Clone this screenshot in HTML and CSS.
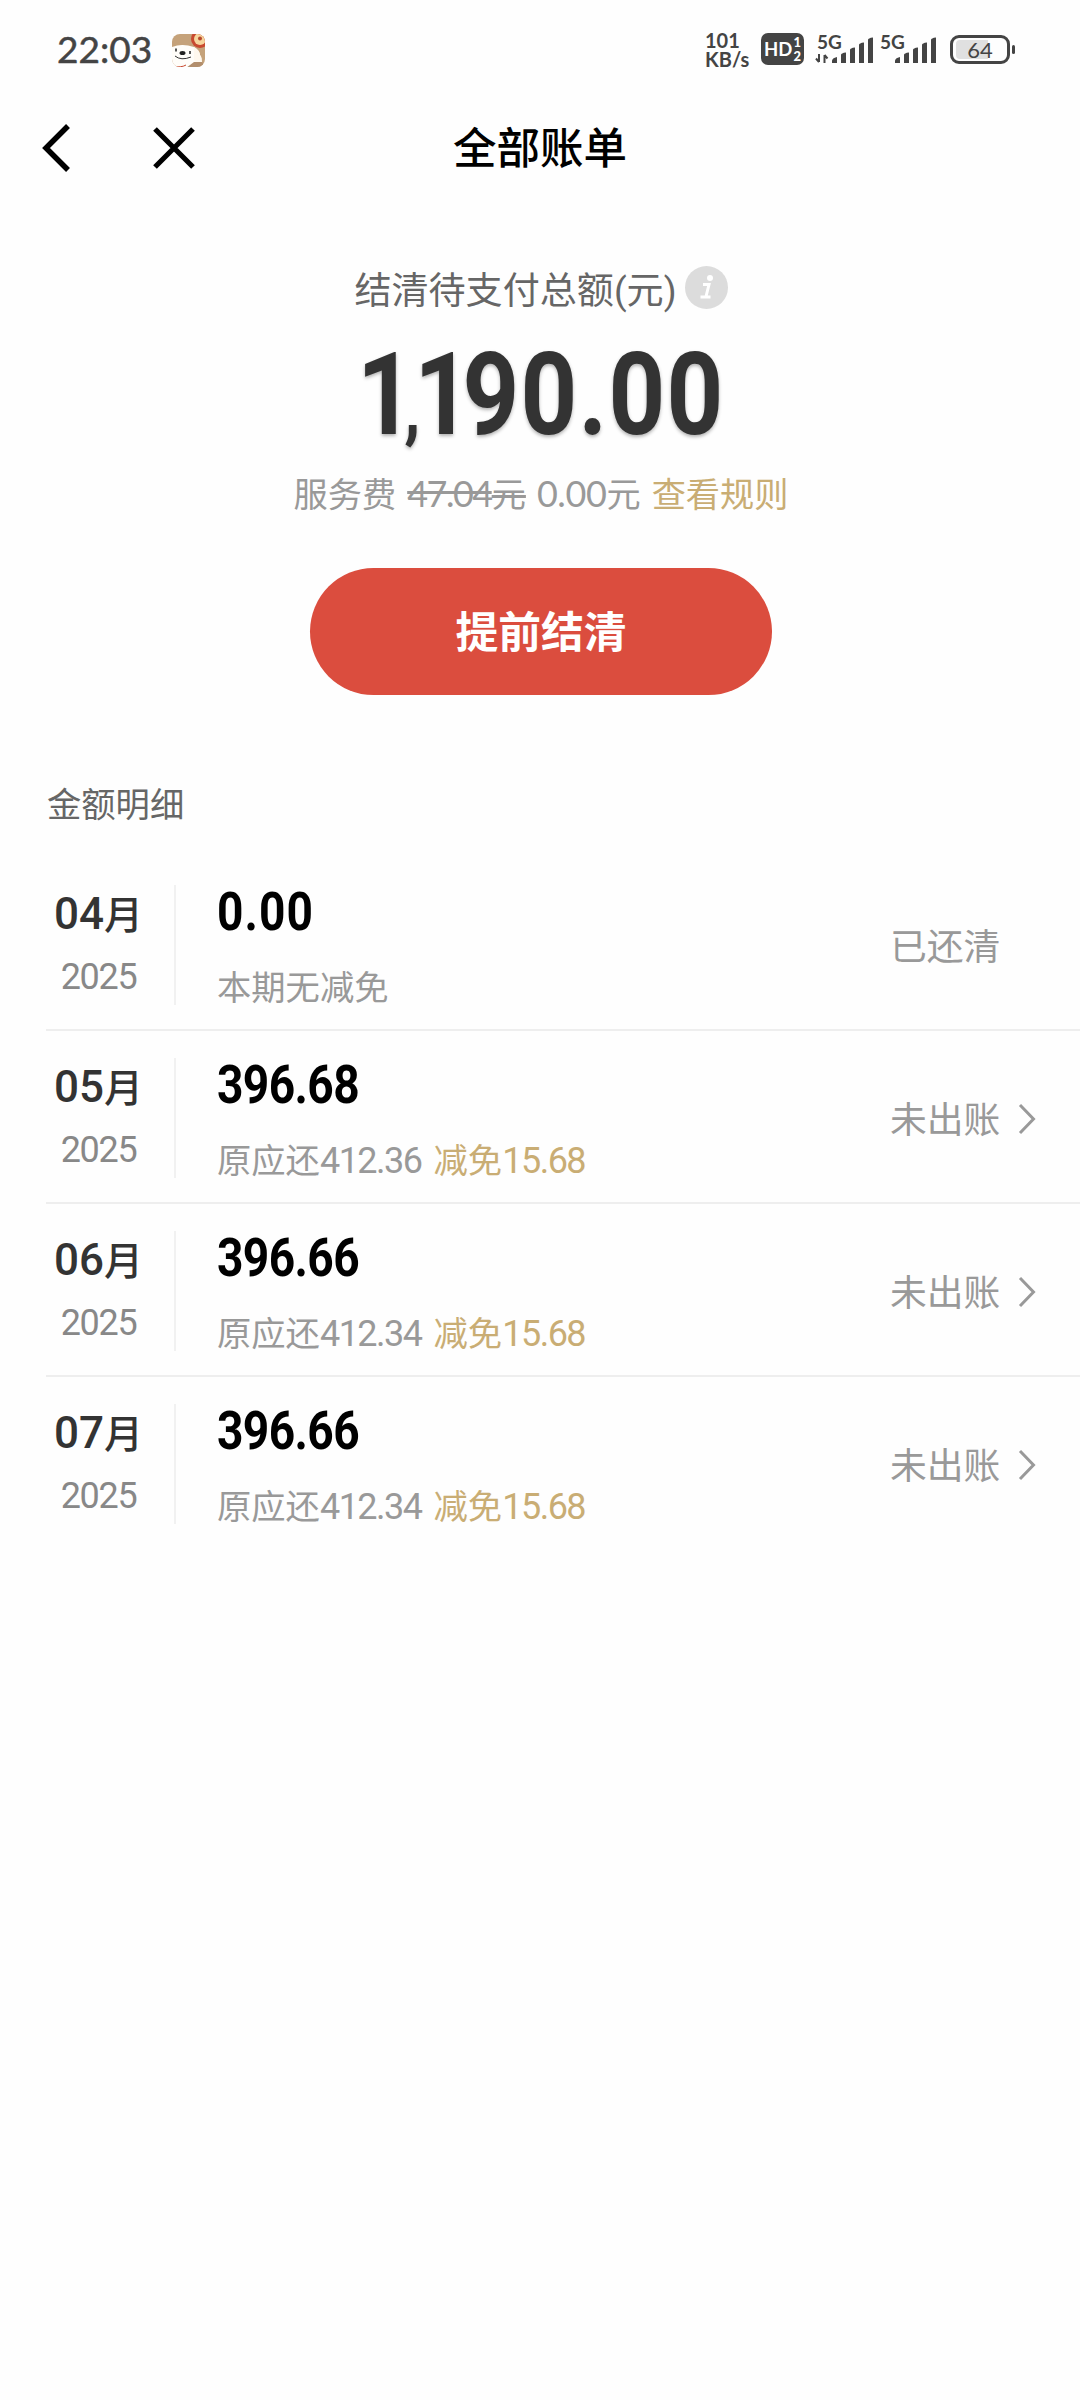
FILE: index.html
```html
<!DOCTYPE html>
<html lang="zh-CN">
<head>
<meta charset="utf-8">
<title>全部账单</title>
<link rel="stylesheet" href="styles.css">
</head>
<body>
<header class="status">
  <span class="clock">22:03</span>
  <svg class="app" width="34" height="34" viewBox="0 0 34 34">
    <defs><clipPath id="r"><rect width="33" height="33" rx="8"/></clipPath></defs>
    <g clip-path="url(#r)">
      <rect width="34" height="34" fill="#c5a27a"/>
      <path d="M0 13 Q10 9 22 13 Q28 16 30 28 L22 34 H0Z" fill="#fffdf9"/>
      <path d="M22 13 Q28 16 28 21 Q31 24 29 29 Q25 30 22 26Z" fill="#fff8ee"/>
      <path d="M22 28 L30 28 L34 34 H14Z" fill="#b28e6c"/>
      <path d="M1 18 Q0 31 10 32 Q20 32 22 24 L20 14 Q9 9 1 14Z" fill="#fffdf9"/>
      <circle cx="28" cy="5" r="9" fill="#c8492f"/>
      <circle cx="28" cy="5" r="6" fill="#f6d59d"/>
      <circle cx="28" cy="4.500" r="2" fill="#b94a2c"/>
      <path d="M1 32 Q9 34 14 31" stroke="#c8492f" stroke-width="1" fill="none"/>
    </g>
    <ellipse cx="10.500" cy="19" rx="3" ry="2" fill="#222"/>
    <path d="M4 14.500v3M18 17v3" stroke="#222" stroke-width="1.500"/>
    <path d="M3 22 Q9 27 19 23" stroke="#333" stroke-width="1" fill="none"/>
  </svg>
  <span class="speed"><b>101</b><b>KB/s</b></span>
  <span class="hd"><b>HD</b><span class="sim"><i>1</i><i>2</i></span></span>
  <span class="signal">
    <b>5G</b>
    <svg width="60" height="40" viewBox="0 0 60 40" fill="#444">
      <path d="M4 22v8M1 26.500l3 3.500M9.500 31v-8M9.500 23l3 3.500" stroke="#444" stroke-width="2" fill="none"/>
      <path d="M17 29q0-3 5-4v6h-5zM26 23q0-2 5-2.500V31h-5zM35 18q0-2 5-2.500V31h-5zM44 13q0-2 5-2.500V31h-5zM53 8q0-2 5-2.500V31h-5z"/>
    </svg>
  </span>
  <span class="signal second">
    <b>5G</b>
    <svg width="60" height="40" viewBox="0 0 60 40" fill="#444">
      <path d="M17 29q0-3 5-4v6h-5zM26 23q0-2 5-2.500V31h-5zM35 18q0-2 5-2.500V31h-5zM44 13q0-2 5-2.500V31h-5zM53 8q0-2 5-2.500V31h-5z"/>
    </svg>
  </span>
  <span class="battery"><span>64</span></span>
  <span class="cap"></span>
</header>
<nav class="nav">
  <svg class="back" width="30" height="50" viewBox="0 0 30 50"><path d="M26 3 L4 25 L26 47" fill="none" stroke="#000" stroke-width="5.500"/></svg>
  <svg class="close" width="42" height="42" viewBox="0 0 42 42"><path d="M2 2 L40 40 M40 2 L2 40" fill="none" stroke="#000" stroke-width="5.200"/></svg>
  <h1>全部账单</h1>
</nav>
<section class="summary">
  <div class="label"><span>结清待支付总额(元)</span>
    <svg width="43" height="43" viewBox="0 0 43 43"><circle cx="21.500" cy="21.500" r="21.500" fill="#dcdcdc"/><circle cx="25" cy="12" r="3" fill="#fff"/><path d="M18 18.500h6l-3 12M15.500 31h10" fill="none" stroke="#fff" stroke-width="3"/></svg>
  </div>
  <div class="total"><span class="t1">1<i>,</i>1</span><span class="t2">90.00</span></div>
  <div class="fee"><span>服务费</span><s><i>47.04</i>元</s><span><i>0.00</i>元</span><a>查看规则</a></div>
  <button class="pay">提前结清</button>
</section>
<h2 class="heading">金额明细</h2>
<main class="bills">
  <article class="bill">
    <div class="date"><strong>04<em>月</em></strong><span>2025</span></div>
    <div class="info"><strong class="zero">0.00</strong><p>本期无减免</p></div>
    <div class="state">已还清</div>
  </article>
  <article class="bill">
    <div class="date"><strong>05<em>月</em></strong><span>2025</span></div>
    <div class="info"><strong>396.68</strong><p>原应还<i>412.36</i><span>减免<i>15.68</i></span></p></div>
    <div class="state">未出账<svg width="18" height="32" viewBox="0 0 18 32"><path d="M2 2 L15.500 16 L2 30" fill="none" stroke="#999" stroke-width="3"/></svg></div>
  </article>
  <article class="bill">
    <div class="date"><strong>06<em>月</em></strong><span>2025</span></div>
    <div class="info"><strong>396.66</strong><p>原应还<i>412.34</i><span>减免<i>15.68</i></span></p></div>
    <div class="state">未出账<svg width="18" height="32" viewBox="0 0 18 32"><path d="M2 2 L15.500 16 L2 30" fill="none" stroke="#999" stroke-width="3"/></svg></div>
  </article>
  <article class="bill">
    <div class="date"><strong>07<em>月</em></strong><span>2025</span></div>
    <div class="info"><strong>396.66</strong><p>原应还<i>412.34</i><span>减免<i>15.68</i></span></p></div>
    <div class="state">未出账<svg width="18" height="32" viewBox="0 0 18 32"><path d="M2 2 L15.500 16 L2 30" fill="none" stroke="#999" stroke-width="3"/></svg></div>
  </article>
</main>
</body>
</html>
```
FILE: styles.css
```css
* { box-sizing: border-box; }
body { margin: 0; width: 1080px; height: 2400px; overflow: hidden; background: #fefefe; color: #333; font-family: Roboto, "Noto Sans CJK SC", sans-serif; }
h1, h2, p { margin: 0; font-weight: 400; }
i, em { font-style: normal; }
svg { display: block; flex: none; }

.status { display: flex; align-items: flex-start; height: 98px; padding: 30px 0 0 57px; color: #444; font-family: Lato, sans-serif; }
.clock { width: 115px; font-size: 37px; line-height: 38px; -webkit-text-stroke: .5px #444; }
.app { margin-top: 4px; }
.speed { width: 56px; margin: 1px 0 0 499px; font-size: 20px; line-height: 19px; }
.speed b { display: block; height: 19px; }
.hd { display: flex; align-items: center; justify-content: center; gap: 1px; width: 43px; height: 32px; margin-top: 3px; border-radius: 7px; background: #444; color: #fff; font-size: 18.500px; }
.sim { font-size: 13px; line-height: 14px; font-weight: 900; }
.sim i { display: block; }
.signal { position: relative; width: 60px; height: 40px; margin: 2px 0 0 11px; }
.signal b { position: absolute; left: 2px; top: 0; font-size: 19px; line-height: 20px; }
.signal.second { margin-left: 3px; }
.battery { display: flex; width: 60px; height: 29px; margin: 5px 0 0 12px; padding: 2px 3px; border: 3px solid #444; border-radius: 9px; }
.battery span { width: 48px; background: linear-gradient(90deg, #e0e0e0 32px, transparent 32px); font-size: 22px; line-height: 19px; text-align: center; border-radius: 4px; }
.cap { width: 3px; height: 9px; margin: 15px 0 0 2px; border-radius: 2px; background: #444; }

.nav { display: grid; grid-template-columns: 111px 300px; align-items: center; height: 100px; padding-left: 42px; }
.nav > * { grid-row: 1; }
.nav h1 { grid-column: 1 / -1; width: 996px; padding-top: 3px; color: #000; font-size: 43.500px; line-height: 60px; font-weight: 500; text-align: center; }
.nav .back { grid-column: 1; }
.nav .close { grid-column: 2; }

.summary { display: flex; flex-direction: column; align-items: center; height: 540px; padding: 62px 0 0 2px; }
.label { display: flex; gap: 8px; height: 60px; color: #666; font-size: 37.100px; line-height: 63px; }
.label svg { margin-top: 6px; }
.total { height: 140px; display: flex; color: #333; font-size: 115px; line-height: 150px; font-weight: 700; text-shadow: 0 2px 4px rgba(0,0,0,.3); transform: scaleX(.86); }
.t1 { letter-spacing: -11px; }
.t1 i { font-size: 76px; letter-spacing: -7px; }
.t2 { margin-left: 1px; letter-spacing: 1.500px; }
.fee { display: flex; gap: 11px; height: 50px; margin-top: 8px; color: #999; font-size: 34.200px; line-height: 54px; }
.fee i { font-family: Lato, sans-serif; font-size: 36px; line-height: 50px; letter-spacing: -.4px; }
.fee s i { letter-spacing: -1.500px; }
.fee a { color: #c9ad74; }
.pay { width: 462px; height: 127px; margin-top: 50px; padding: 0 0 4px; border: 0; border-radius: 64px; background: #db4d3e; color: #fff; font: 700 42.800px/119px "Noto Sans CJK SC", sans-serif; }

.heading { height: 120px; padding: 42px 0 0 47px; color: #666; font-size: 34.300px; line-height: 50px; }
.bill { display: grid; grid-template-columns: 130px 1fr 190px; height: 173px; margin-left: 46px; border-bottom: 2px solid #eee; }
.bill:last-child { border: 0; }
.date { display: flex; flex-direction: column; align-items: center; height: 120px; margin-top: 27px; padding-right: 23px; border-right: 2px solid #f1f1f1; }
.date strong { font-size: 44px; line-height: 58px; font-weight: 500; }
.date em { font-size: 39px; }
.date span { margin-top: 5px; color: #888; font-size: 36px; line-height: 54px; letter-spacing: -1.300px; }
.info { padding: 24px 0 0 41px; }
.info strong { display: block; width: max-content; color: #000; font-size: 53px; line-height: 60px; font-weight: 700; letter-spacing: -.7px; transform: scaleX(.87); transform-origin: 0 0; }
.info .zero { letter-spacing: 1.200px; }
.info p { height: 50px; margin-top: 20px; color: #999; font-size: 34.300px; line-height: 52px; }
.info p i { font-size: 36px; letter-spacing: -1.500px; }
.info p span { margin-left: 12px; color: #c9ad74; }
.state { display: flex; align-items: center; gap: 18px; height: 179px; color: #999; font-size: 36.800px; line-height: 50px; }
.state svg { margin-bottom: 3px; }
```
